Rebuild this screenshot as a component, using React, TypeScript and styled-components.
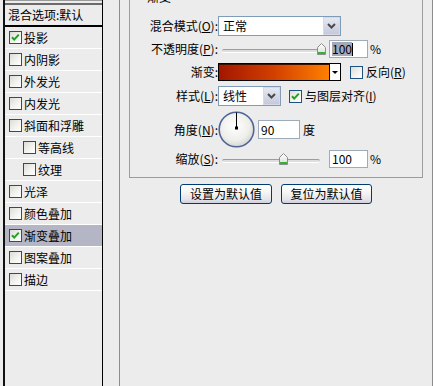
import React from "react";
import styled, { createGlobalStyle } from "styled-components";

const Global = createGlobalStyle`
  html, body { margin: 0; padding: 0; background: #ececec; overflow: hidden; }
  body {
    font-family: "Noto Sans CJK SC", "Liberation Sans", sans-serif;
    font-size: 12px;
    line-height: 14px;
    color: #000;
  }
  * { box-sizing: border-box; }
`;

const Root = styled.div`
  display: flex;
  align-items: stretch;
  height: 386px;
  padding-left: 3px;
`;

const LeftPanel = styled.div`
  width: 100px;
  border-left: 2px solid #111;
  border-right: 1px solid #000;
  display: flex;
  flex-direction: column;
`;

const TopStrip = styled.div`
  height: 5px;
  border-top: 1px solid #9a9a9a;
  border-bottom: 2px solid #6a6a6a;
`;

const Header = styled.div`
  height: 22px;
  border-bottom: 2px solid #000;
  padding-left: 3px;
  display: flex;
  align-items: center;
  white-space: nowrap;
`;

const ListRow = styled.div<{ $indent?: boolean; $active?: boolean }>`
  height: 22px;
  border-bottom: 1px solid #fff;
  display: flex;
  align-items: center;
  gap: 2px;
  padding-left: ${(p) => (p.$indent ? 18 : 4)}px;
  background: ${(p) => (p.$active ? "#b4b6c5" : "transparent")};
  white-space: nowrap;
`;

const Box = styled.span`
  width: 13px;
  height: 13px;
  flex: none;
  border: 1px solid #1c5180;
  background: linear-gradient(135deg, #dcdcd7 0%, #f4f4f1 60%, #ffffff 100%);
  display: inline-flex;
  align-items: center;
  justify-content: center;
`;

const RightFrame = styled.div`
  flex: 1;
  margin-left: 16px;
  border-left: 1px solid #8c8c8c;
  border-right: 1px solid #8c8c8c;
  padding: 0 9px;
`;

const GroupBox = styled.div`
  position: relative;
  margin-top: -4px;
  border: 1px solid #9c9c9c;
  padding: 19px 0 8px;
`;

const Legend = styled.span`
  position: absolute;
  top: -7px;
  left: 14px;
  padding: 0 3px;
  background: #ececec;
`;

const FormRow = styled.div<{ $h: number; $mt: number }>`
  display: grid;
  grid-template-columns: 88px 1fr;
  height: ${(p) => p.$h}px;
  margin-top: ${(p) => p.$mt}px;
  align-items: center;
`;

const Label = styled.div`
  text-align: right;
  white-space: nowrap;
`;

const Field = styled.div`
  display: flex;
  align-items: center;
  height: 100%;
  white-space: nowrap;
`;

const Select = styled.div<{ $w: number }>`
  width: ${(p) => p.$w}px;
  height: 20px;
  border: 1px solid #7f9db9;
  background: #fff;
  display: flex;
  align-items: stretch;
`;

const SelectText = styled.span`
  flex: 1;
  padding-left: 4px;
  display: flex;
  align-items: center;
`;

const DropBtn = styled.span`
  width: 17px;
  border: 1px solid #d6d9e6;
  background: linear-gradient(#e6e8f1, #c5c9da);
  display: flex;
  align-items: center;
  justify-content: center;
`;

const GradientBox = styled.div`
  width: 123px;
  height: 18px;
  border: 1px solid #000;
  display: flex;
`;

const GradientFill = styled.div`
  flex: 1;
  background: linear-gradient(to right, #a21600, #d24000 50%, #ff8000);
  border-right: 1px solid #000;
  box-shadow: inset 0 1px 0 #3a1000;
`;

const GradArrow = styled.div`
  width: 10px;
  background: #fff;
  display: flex;
  align-items: center;
  justify-content: center;
`;

const Tri = styled.span`
  width: 0;
  height: 0;
  border-left: 3px solid transparent;
  border-right: 3px solid transparent;
  border-top: 3px solid #000;
`;

const CheckLabel = styled.span<{ $ml: number }>`
  display: inline-flex;
  align-items: center;
  gap: 3px;
  margin-left: ${(p) => p.$ml}px;
`;

const Input = styled.div<{ $w: number; $h: number; $ml?: number }>`
  width: ${(p) => p.$w}px;
  height: ${(p) => p.$h}px;
  margin-left: ${(p) => p.$ml ?? 0}px;
  border: 1px solid #9eabb9;
  background: #fff;
  padding-left: 2px;
  display: flex;
  align-items: center;
`;

const Sel = styled.span`
  background: #a4a9ba;
`;

const Caret = styled.span`
  width: 1px;
  height: 13px;
  background: #000;
`;

const Unit = styled.span<{ $ml: number }>`
  margin-left: ${(p) => p.$ml}px;
`;

const SliderWrap = styled.div`
  position: relative;
  width: 107px;
  height: 14px;
  margin-left: 4px;
`;

const Track = styled.div`
  width: 98px;
  height: 4px;
  margin-top: 7px;
  border-radius: 2px;
  background: #dedede;
  border-top: 1px solid #9c9c9c;
  border-bottom: 1px solid #fff;
`;

const Thumb = styled.svg`
  position: absolute;
  top: 1px;
`;

const Dial = styled.svg`
  flex: none;
`;

const ButtonRow = styled.div`
  display: flex;
  justify-content: center;
  gap: 9px;
  margin-top: 6px;
`;

const Button = styled.div<{ $w: number }>`
  width: ${(p) => p.$w}px;
  height: 20px;
  border: 1px solid #003c74;
  border-radius: 3px;
  background: linear-gradient(#ffffff 0%, #f4f4f2 45%, #e4e4ea 80%, #cfd0dc 100%);
  display: flex;
  align-items: center;
  justify-content: center;
  white-space: nowrap;
`;

const Check = () => (
  <svg width="11" height="11" viewBox="0 0 11 11">
    <path d="M2 5.2 L4.2 7.6 L8.8 2.6" fill="none" stroke="#21a121" strokeWidth="2" />
  </svg>
);

const CheckBox = ({ checked }: { checked?: boolean }) => <Box>{checked && <Check />}</Box>;

const Chevron = () => (
  <svg width="9" height="6" viewBox="0 0 9 6">
    <path d="M1 1 L4.5 4.5 L8 1" fill="none" stroke="#4a4a4a" strokeWidth="2" />
  </svg>
);

const SliderThumb = ({ left }: { left: number }) => (
  <Thumb width="9" height="12" viewBox="0 0 9 12" style={{ left }}>
    <defs>
      <linearGradient id="tg" x1="0" y1="0" x2="0" y2="1">
        <stop offset="0" stopColor="#ffffff" />
        <stop offset="1" stopColor="#dcdcd6" />
      </linearGradient>
    </defs>
    <path d="M0.5 4.5 L4.5 0.5 L8.5 4.5 V11.5 H0.5 Z" fill="url(#tg)" stroke="#8c8c8c" />
    <rect x="1" y="9" width="7" height="2" fill="#35b235" />
  </Thumb>
);

const items: { t: string; c?: boolean; i?: boolean; a?: boolean }[] = [
  { t: "投影", c: true },
  { t: "内阴影" },
  { t: "外发光" },
  { t: "内发光" },
  { t: "斜面和浮雕" },
  { t: "等高线", i: true },
  { t: "纹理", i: true },
  { t: "光泽" },
  { t: "颜色叠加" },
  { t: "渐变叠加", c: true, a: true },
  { t: "图案叠加" },
  { t: "描边" },
];

export default function App() {
  return (
    <>
      <Global />
      <Root>
        <LeftPanel>
          <TopStrip />
          <Header>混合选项:默认</Header>
          {items.map((it) => (
            <ListRow key={it.t} $indent={it.i} $active={it.a}>
              <CheckBox checked={it.c} />
              <span>{it.t}</span>
            </ListRow>
          ))}
        </LeftPanel>
        <RightFrame>
          <GroupBox>
            <Legend>渐变</Legend>
            <FormRow $h={20} $mt={0}>
              <Label>
                混合模式(<u>O</u>):
              </Label>
              <Field>
                <Select $w={123}>
                  <SelectText>正常</SelectText>
                  <DropBtn>
                    <Chevron />
                  </DropBtn>
                </Select>
              </Field>
            </FormRow>
            <FormRow $h={20} $mt={3}>
              <Label>
                不透明度(<u>P</u>):
              </Label>
              <Field>
                <SliderWrap>
                  <Track />
                  <SliderThumb left={95} />
                </SliderWrap>
                <Input $w={39} $h={18}>
                  <Sel>100</Sel>
                  <Caret />
                </Input>
                <Unit $ml={2}>%</Unit>
              </Field>
            </FormRow>
            <FormRow $h={20} $mt={3}>
              <Label>渐变:</Label>
              <Field>
                <GradientBox>
                  <GradientFill />
                  <GradArrow>
                    <Tri />
                  </GradArrow>
                </GradientBox>
                <CheckLabel $ml={9}>
                  <CheckBox />
                  <span>
                    反向(<u>R</u>)
                  </span>
                </CheckLabel>
              </Field>
            </FormRow>
            <FormRow $h={20} $mt={4}>
              <Label>
                样式(<u>L</u>):
              </Label>
              <Field>
                <Select $w={63}>
                  <SelectText>线性</SelectText>
                  <DropBtn>
                    <Chevron />
                  </DropBtn>
                </Select>
                <CheckLabel $ml={8}>
                  <CheckBox checked />
                  <span>
                    与图层对齐(<u>I</u>)
                  </span>
                </CheckLabel>
              </Field>
            </FormRow>
            <FormRow $h={39} $mt={4}>
              <Label>
                角度(<u>N</u>):
              </Label>
              <Field>
                <Dial width="37" height="37" viewBox="0 0 37 37">
                  <defs>
                    <radialGradient id="dg" cx="0.45" cy="0.4" r="0.6">
                      <stop offset="0" stopColor="#ffffff" />
                      <stop offset="0.7" stopColor="#eeeeea" />
                      <stop offset="1" stopColor="#d6d6d2" />
                    </radialGradient>
                  </defs>
                  <circle cx="18.5" cy="18.5" r="17.3" fill="url(#dg)" stroke="#50649a" strokeWidth="1.6" />
                  <line x1="18.5" y1="1.5" x2="18.5" y2="17" stroke="#000" strokeWidth="1" />
                  <rect x="17" y="15.5" width="3" height="3" fill="#000" />
                </Dial>
                <Input $w={42} $h={19} $ml={3}>
                  90
                </Input>
                <Unit $ml={3}>度</Unit>
              </Field>
            </FormRow>
            <FormRow $h={20} $mt={0}>
              <Label>
                缩放(<u>S</u>):
              </Label>
              <Field>
                <SliderWrap>
                  <Track />
                  <SliderThumb left={57} />
                </SliderWrap>
                <Input $w={39} $h={18}>
                  100
                </Input>
                <Unit $ml={2}>%</Unit>
              </Field>
            </FormRow>
          </GroupBox>
          <ButtonRow>
            <Button $w={92}>设置为默认值</Button>
            <Button $w={91}>复位为默认值</Button>
          </ButtonRow>
        </RightFrame>
      </Root>
    </>
  );
}
